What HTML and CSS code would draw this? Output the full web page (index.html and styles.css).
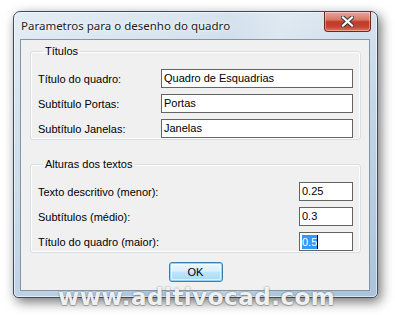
FILE: index.html
```html
<!DOCTYPE html>
<html lang="pt">

<head>
  <meta charset="UTF-8">
  <meta name="viewport" content="width=device-width, initial-scale=1.0">
  <title>Parametros para o desenho do quadro</title>
  <link rel="stylesheet" href="styles.css">
</head>

<body>
  <div class="desktop">
    <div class="window">
      <div class="titlebar">
        <span class="title">Parametros para o desenho do quadro</span>
        <button class="close" aria-label="Fechar">
          <svg width="13" height="11" viewBox="0 0 13 11">
            <path d="M2 1.5 L11 9.5 M11 1.5 L2 9.5" stroke="#3b3b3b" stroke-width="4.2" stroke-linecap="square" fill="none" />
            <path d="M2 1.5 L11 9.5 M11 1.5 L2 9.5" stroke="#ffffff" stroke-width="2.2" stroke-linecap="square" fill="none" />
          </svg>
        </button>
      </div>

      <div class="client">
        <fieldset class="group">
          <legend>Títulos</legend>
          <div class="row">
            <span class="label">Título do quadro:</span>
            <div class="textbox wide">Quadro de Esquadrias</div>
          </div>
          <div class="row">
            <span class="label">Subtítulo Portas:</span>
            <div class="textbox wide">Portas</div>
          </div>
          <div class="row">
            <span class="label">Subtítulo Janelas:</span>
            <div class="textbox wide">Janelas</div>
          </div>
        </fieldset>

        <fieldset class="group second">
          <legend>Alturas dos textos</legend>
          <div class="row">
            <span class="label">Texto descritivo (menor):</span>
            <div class="textbox small">0.25</div>
          </div>
          <div class="row">
            <span class="label">Subtítulos (médio):</span>
            <div class="textbox small">0.3</div>
          </div>
          <div class="row">
            <span class="label">Título do quadro (maior):</span>
            <div class="textbox small"><span class="selected">0.5</span><span class="caret"></span></div>
          </div>
        </fieldset>

        <div class="actions">
          <button class="ok">OK</button>
        </div>
      </div>
    </div>

    <div class="watermark">www.aditivocad.com</div>
  </div>
</body>

</html>
```

FILE: styles.css
```css
html,
body {
  margin: 0;
  padding: 0;
}

body {
  width: 395px;
  height: 315px;
  overflow: hidden;
  background-color: #ffffff;
  font-family: "Liberation Sans", Arial, sans-serif;
  font-size: 11px;
  color: #000;
}

.desktop {
  position: relative;
  height: 315px;
  padding: 11px 0 0 13px;
  box-sizing: border-box;
}

/* aero frame */
.window {
  width: 365px;
  box-sizing: border-box;
  padding: 0 7px 6px 6px;
  border: 1px solid #3f4c58;
  border-radius: 7px 7px 5px 5px;
  background:
    linear-gradient(105deg, rgba(255, 255, 255, 0.35) 0%, rgba(255, 255, 255, 0.15) 35%, rgba(255, 255, 255, 0) 50%, rgba(255, 255, 255, 0.25) 62%, rgba(255, 255, 255, 0) 80%),
    linear-gradient(to bottom, #d6e3ee 0%, #c0d4e5 40%, #aac4dc 100%);
  box-shadow: inset 0 0 0 1px rgba(255, 255, 255, 0.55), 3px 4px 12px rgba(0, 0, 0, 0.55);
}

.titlebar {
  height: 27px;
  display: flex;
  align-items: flex-start;
  justify-content: space-between;
}

.title {
  margin-top: 6px;
  margin-left: 1px;
  font-family: "Noto Sans", "Open Sans", sans-serif;
  font-size: 11.5px;
  color: #1c1c1c;
  text-shadow: 0 0 6px rgba(255, 255, 255, 0.95), 0 0 2px rgba(255, 255, 255, 0.9);
}

.close {
  width: 47px;
  height: 20px;
  margin-right: -1px;
  padding: 0;
  border: 1px solid #6b2a1f;
  border-top: none;
  border-radius: 0 0 4px 4px;
  display: flex;
  align-items: center;
  justify-content: center;
  background: linear-gradient(to bottom, #e8a898 0%, #d9786a 40%, #c23a28 52%, #c8432f 78%, #de7a62 100%);
  box-shadow: inset 0 0 0 1px rgba(255, 255, 255, 0.35);
}

.client {
  background-color: #f0f0f0;
  border: 1px solid #8396a9;
  padding: 5px 8px 8px 9px;
}

.group {
  margin: 0;
  padding: 5px 7px 1px 7px;
  border: 1px solid #d5dfe5;
  border-radius: 3px;
  box-shadow: inset 0 0 0 1px #ffffff;
}

.group legend {
  padding: 0 2px;
  margin-left: 5px;
  line-height: 13px;
  color: #000;
}

.group.second {
  margin-top: 18px;
}

.row {
  display: flex;
  align-items: center;
  justify-content: space-between;
  height: 19px;
  margin-top: 6px;
}

.textbox {
  height: 19px;
  box-sizing: border-box;
  border: 1px solid #646464;
  background-color: #ffffff;
  padding: 0 2px;
  line-height: 17px;
  white-space: nowrap;
  display: flex;
  align-items: center;
}

.textbox.wide {
  width: 192px;
}

.textbox.small {
  width: 54px;
}

.selected {
  background-color: #3399ff;
  color: #ffffff;
  line-height: 14px;
}

.caret {
  display: inline-block;
  width: 1px;
  height: 14px;
  background-color: #000;
}

.actions {
  display: flex;
  justify-content: center;
  margin-top: 9px;
}

.ok {
  width: 54px;
  height: 20px;
  padding: 0;
  font-family: "Liberation Sans", Arial, sans-serif;
  font-size: 11px;
  color: #000;
  border: 1px solid #3c7fb1;
  border-radius: 3px;
  background: linear-gradient(to bottom, #eaf6fd 0%, #d9f0fc 45%, #bee6fd 50%, #a7d9f5 100%);
  box-shadow: inset 0 0 0 1px #8fd3f6, inset 0 0 0 2px rgba(255, 255, 255, 0.6);
}

.watermark {
  position: absolute;
  left: 58px;
  top: 284px;
  font-family: "DejaVu Sans", sans-serif;
  font-weight: bold;
  font-size: 23px;
  letter-spacing: 0.5px;
  color: rgba(248, 248, 248, 0.95);
  text-shadow: 0 1px 0 rgba(120, 120, 120, 0.5), 0 0 2px rgba(0, 0, 0, 0.45);
}
```
